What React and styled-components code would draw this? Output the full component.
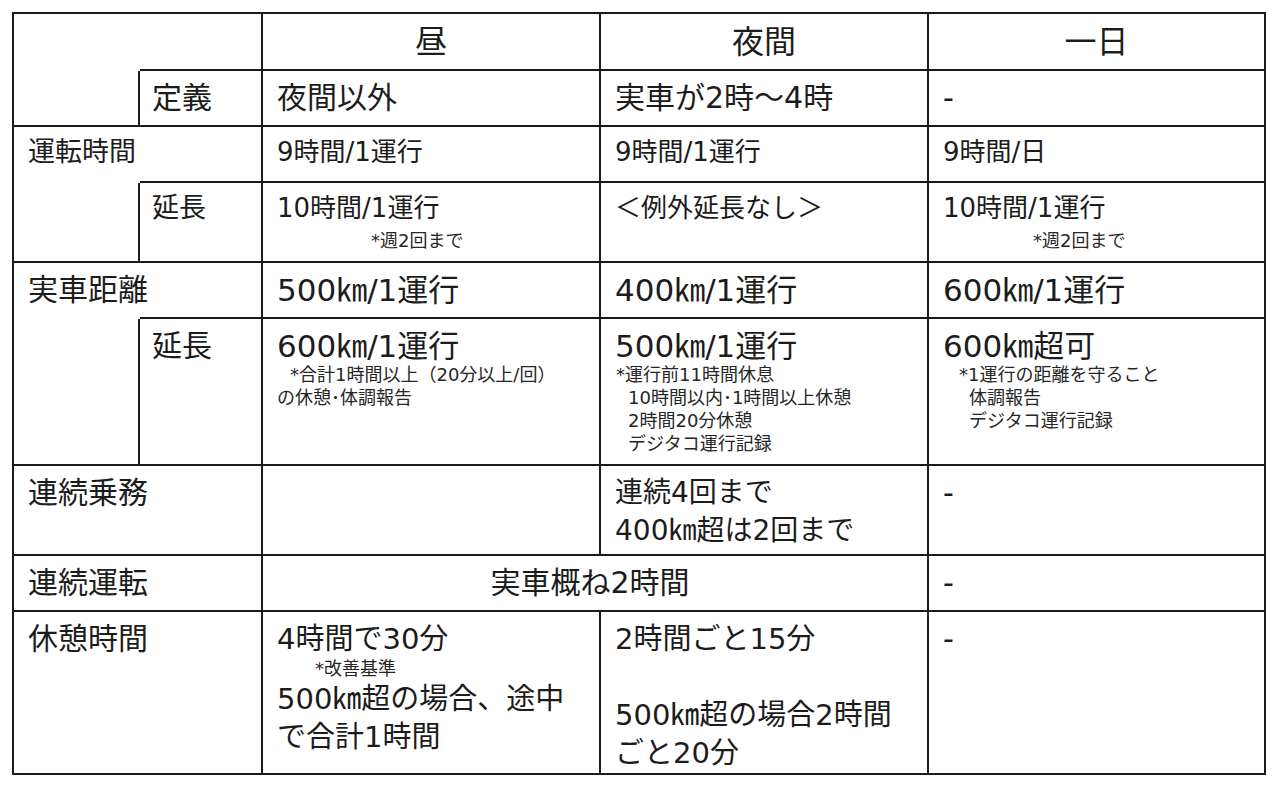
import React from "react";
import styled, { createGlobalStyle } from "styled-components";

const GlobalStyle = createGlobalStyle`
  body {
    margin: 0;
    background: #fff;
  }
`;

const LINE = "2px solid #1b1b1b";

const Table = styled.div`
  display: grid;
  grid-template-columns: 126px 123px 338px 328px 337px;
  grid-template-rows: 57px 56px 56px 80px 56px 147px 90px 56px 163px;
  width: max-content;
  margin: 12px 0 0 12px;
  border-top: ${LINE};
  border-left: ${LINE};
  font-family: "DejaVu Sans", "Noto Sans CJK JP", sans-serif;
  color: #1c1c1c;
`;

const Cell = styled.div`
  grid-column: ${(p) => p.$c};
  grid-row: ${(p) => p.$r};
  box-sizing: border-box;
  border-right: ${(p) => (p.$noRight ? "none" : LINE)};
  border-bottom: ${(p) => (p.$noBottom ? "none" : LINE)};
  padding: 8px 10px 0 ${(p) => p.$pad ?? 14}px;
  font-size: ${(p) => p.$size ?? 30}px;
  line-height: ${(p) => p.$lh ?? 38}px;
  text-align: ${(p) => (p.$center ? "center" : "left")};
  white-space: nowrap;
`;

const HeadCell = styled(Cell)`
  display: flex;
  align-items: center;
  justify-content: center;
  padding: 0;
  font-size: 32px;
`;

const Line = styled.div`
  min-height: ${(p) => p.$lh ?? 38}px;
`;

const Note = styled.div`
  font-size: 18px;
  line-height: ${(p) => p.$lh ?? 23}px;
  padding-left: ${(p) => p.$indent ?? 0}px;
  margin-top: ${(p) => p.$mt ?? 0}px;
  color: #262626;
`;

export default function App() {
  return (
    <>
      <GlobalStyle />
      <Table>
        {/* header */}
        <Cell $c="1" $r="1" $noRight $noBottom />
        <Cell $c="2" $r="1" />
        <HeadCell $c="3" $r="1">昼</HeadCell>
        <HeadCell $c="4" $r="1">夜間</HeadCell>
        <HeadCell $c="5" $r="1">一日</HeadCell>

        {/* 定義 */}
        <Cell $c="1" $r="2" />
        <Cell $c="2" $r="2" $pad={12}>定義</Cell>
        <Cell $c="3" $r="2">夜間以外</Cell>
        <Cell $c="4" $r="2">実車が2時〜4時</Cell>
        <Cell $c="5" $r="2">-</Cell>

        {/* 運転時間 */}
        <Cell $c="1" $r="3" $noRight $noBottom $size={27} $lh={34}>運転時間</Cell>
        <Cell $c="2" $r="3" />
        <Cell $c="3" $r="3" $size={26} $lh={34}>9時間/1運行</Cell>
        <Cell $c="4" $r="3" $size={26} $lh={34}>9時間/1運行</Cell>
        <Cell $c="5" $r="3" $size={26} $lh={34}>9時間/日</Cell>

        <Cell $c="1" $r="4" />
        <Cell $c="2" $r="4" $pad={12} $size={27} $lh={34}>延長</Cell>
        <Cell $c="3" $r="4" $size={26} $lh={34}>
          <Line $lh={34}>10時間/1運行</Line>
          <Note $indent={94} $mt={5} $lh={22}>*週2回まで</Note>
        </Cell>
        <Cell $c="4" $r="4" $size={26} $lh={34}>＜例外延長なし＞</Cell>
        <Cell $c="5" $r="4" $size={26} $lh={34}>
          <Line $lh={34}>10時間/1運行</Line>
          <Note $indent={90} $mt={5} $lh={22}>*週2回まで</Note>
        </Cell>

        {/* 実車距離 */}
        <Cell $c="1" $r="5" $noRight $noBottom>実車距離</Cell>
        <Cell $c="2" $r="5" />
        <Cell $c="3" $r="5" $size={31}>500㎞/1運行</Cell>
        <Cell $c="4" $r="5" $size={31}>400㎞/1運行</Cell>
        <Cell $c="5" $r="5" $size={31}>600㎞/1運行</Cell>

        <Cell $c="1" $r="6" />
        <Cell $c="2" $r="6" $pad={12}>延長</Cell>
        <Cell $c="3" $r="6" $size={31}>
          <Line>600㎞/1運行</Line>
          <Note $indent={13} $mt={-2}>*合計1時間以上（20分以上/回）</Note>
          <Note>の休憩･体調報告</Note>
        </Cell>
        <Cell $c="4" $r="6" $size={31}>
          <Line>500㎞/1運行</Line>
          <Note $indent={1} $mt={-2}>*運行前11時間休息</Note>
          <Note $indent={13}>10時間以内･1時間以上休憩</Note>
          <Note $indent={13}>2時間20分休憩</Note>
          <Note $indent={13}>デジタコ運行記録</Note>
        </Cell>
        <Cell $c="5" $r="6" $size={31}>
          <Line>600㎞超可</Line>
          <Note $indent={16} $mt={-2}>*1運行の距離を守ること</Note>
          <Note $indent={26}>体調報告</Note>
          <Note $indent={26}>デジタコ運行記録</Note>
        </Cell>

        {/* 連続乗務 */}
        <Cell $c="1 / 3" $r="7">連続乗務</Cell>
        <Cell $c="3" $r="7" />
        <Cell $c="4" $r="7" $size={28}>
          <Line>連続4回まで</Line>
          <Line>400㎞超は2回まで</Line>
        </Cell>
        <Cell $c="5" $r="7">-</Cell>

        {/* 連続運転 */}
        <Cell $c="1 / 3" $r="8">連続運転</Cell>
        <Cell $c="3 / 5" $r="8" $center $pad={0}>実車概ね2時間</Cell>
        <Cell $c="5" $r="8">-</Cell>

        {/* 休憩時間 */}
        <Cell $c="1 / 3" $r="9">休憩時間</Cell>
        <Cell $c="3" $r="9" $size={29}>
          <Line>4時間で30分</Line>
          <Note $indent={38} $lh={22}>*改善基準</Note>
          <Line>500㎞超の場合、途中</Line>
          <Line>で合計1時間</Line>
        </Cell>
        <Cell $c="4" $r="9" $size={29}>
          <Line>2時間ごと15分</Line>
          <Line />
          <Line>500㎞超の場合2時間</Line>
          <Line>ごと20分</Line>
        </Cell>
        <Cell $c="5" $r="9">-</Cell>
      </Table>
    </>
  );
}
